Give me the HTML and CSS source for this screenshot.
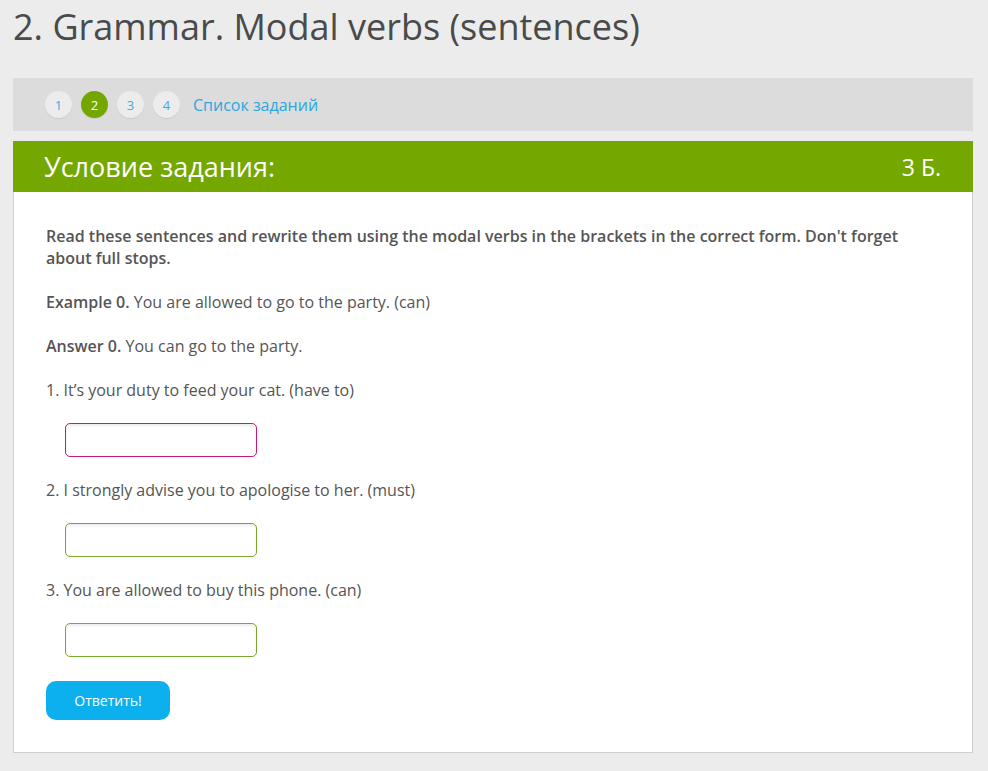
FILE: index.html
```html
<!DOCTYPE html>
<html lang="ru">
<head>
    <meta charset="UTF-8">
    <title>2. Grammar. Modal verbs (sentences)</title>
    <link rel="stylesheet" href="styles.css">
</head>
<body>
    <div class="page">
        <h1 class="title">2. Grammar. Modal verbs (sentences)</h1>

        <div class="task-nav">
            <a class="task-num">1</a>
            <a class="task-num active">2</a>
            <a class="task-num">3</a>
            <a class="task-num">4</a>
            <a class="task-list">Список заданий</a>
        </div>

        <div class="card">
            <div class="card-head">
                <span class="card-title">Условие задания:</span>
                <span class="card-points">3 Б.</span>
            </div>
            <div class="card-body">
                <p class="lead">Read these sentences and rewrite them using the modal verbs in the brackets in the correct form. Don't forget about full stops.</p>
                <p><b>Example 0.</b> You are allowed to go to the party. (can)</p>
                <p><b>Answer 0.</b> You can go to the party.</p>
                <p>1. It’s your duty to feed your cat. (have to)</p>
                <input class="answer focused" type="text" autofocus>
                <p>2. I strongly advise you to apologise to her. (must)</p>
                <input class="answer" type="text">
                <p>3. You are allowed to buy this phone. (can)</p>
                <input class="answer" type="text">
                <button class="submit">Ответить!</button>
            </div>
        </div>
    </div>
</body>
</html>
```

FILE: styles.css
```css
* {
    margin: 0;
    padding: 0;
    box-sizing: border-box;
}

html, body {
    font-family: "Open Sans", sans-serif;
    background: #ececec;
    color: #555;
}

.page {
    padding: 0 15px 0 13px;
}

.title {
    font-weight: 400;
    font-size: 36px;
    line-height: 54px;
    color: #4a4a4a;
    margin-bottom: 24px;
}

.task-nav {
    display: flex;
    align-items: center;
    gap: 9px;
    height: 53px;
    padding-left: 32px;
    background: #dcdcdc;
    margin-bottom: 10px;
}

.task-num {
    display: flex;
    align-items: center;
    justify-content: center;
    width: 27px;
    height: 27px;
    border-radius: 50%;
    background: #ececec;
    color: #3fa9de;
    font-size: 13px;
    box-shadow: 0 1px 1px rgba(0, 0, 0, 0.08);
}

.task-num.active {
    background: #73a700;
    color: #fff;
}

.task-list {
    margin-left: 4px;
    color: #2ba6de;
    font-size: 16px;
}

.card {
    background: #fff;
    border: 1px solid #cfcfcf;
    border-top: none;
}

.card-head {
    display: flex;
    justify-content: space-between;
    align-items: center;
    height: 51px;
    padding: 0 32px 0 31px;
    background: #74a801;
    color: #fff;
    margin: 0 -1px;
}

.card-title {
    font-size: 27px;
}

.card-points {
    font-size: 23px;
}

.card-body {
    display: flex;
    flex-direction: column;
    align-items: flex-start;
    gap: 22px;
    padding: 33px 32px 32px 32px;
    font-size: 16px;
    line-height: 22px;
}

.card-body b,
.lead {
    font-weight: 600;
}

.answer {
    width: 192px;
    height: 34px;
    margin-left: 19px;
    border: 1px solid #78a92a;
    border-radius: 5px;
    box-shadow: inset 0 2px 3px rgba(0, 0, 0, 0.08);
    font-family: "Open Sans", sans-serif;
    font-size: 16px;
    padding: 0 6px;
    outline: none;
}

.answer.focused {
    border-color: #c4197e;
}

.submit {
    margin-top: 2px;
    width: 124px;
    height: 39px;
    border: none;
    border-radius: 10px;
    background: #0cb0ec;
    color: #fff;
    font-family: "Open Sans", sans-serif;
    font-size: 14px;
}
```
